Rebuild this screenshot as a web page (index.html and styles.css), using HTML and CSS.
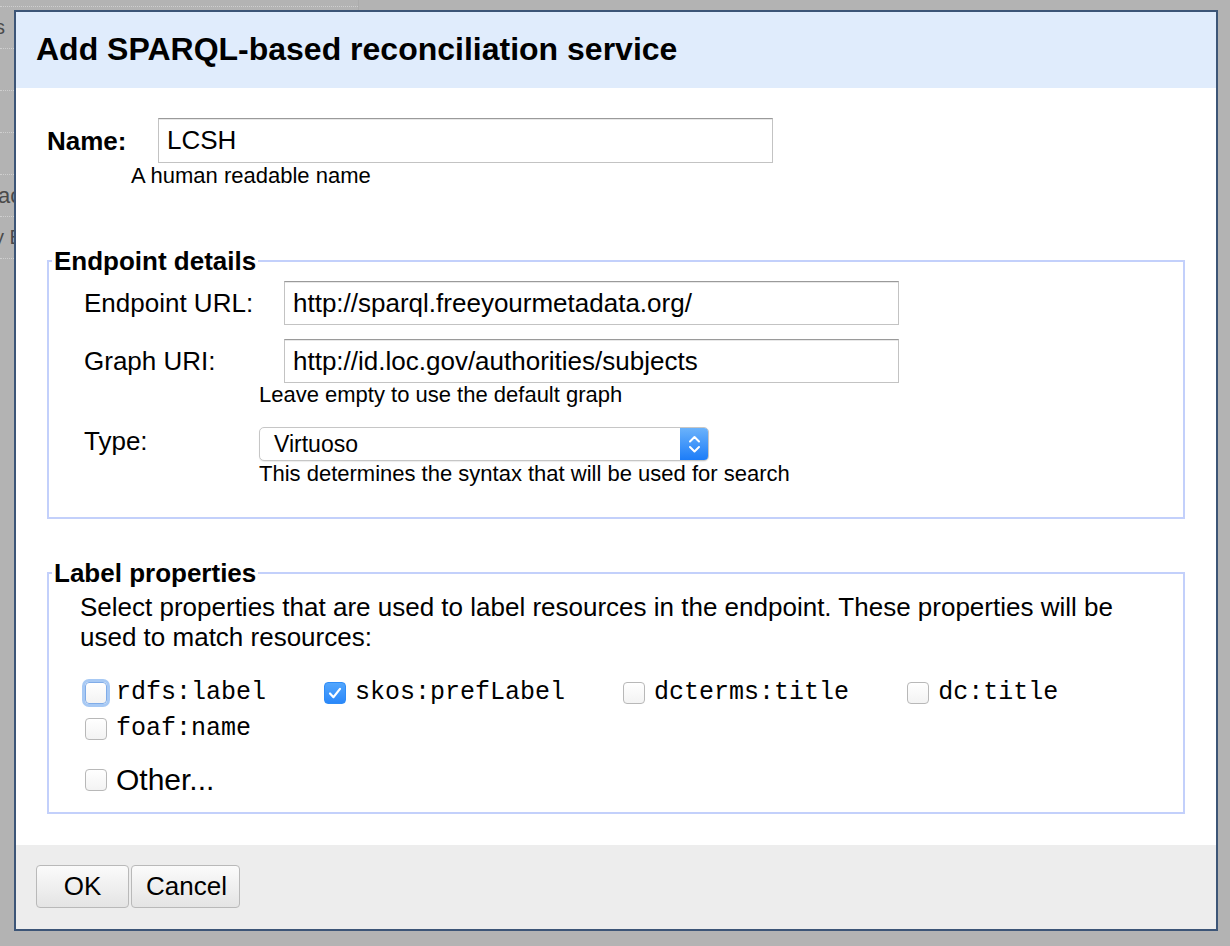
FILE: index.html
```html
<!DOCTYPE html>
<html>
<head>
<meta charset="utf-8">
<title>Add SPARQL-based reconciliation service</title>
<link rel="stylesheet" href="styles.css">
</head>
<body>
<div class="page">
  <div class="side">
    <div class="side-row first"></div>
    <div class="side-row"><span class="cut cut-s">s</span></div>
    <div class="side-row"></div>
    <div class="side-row"></div>
    <div class="side-row"></div>
    <div class="side-row"><span class="cut cut-ac">ac</span></div>
    <div class="side-row"><span class="cut cut-ye">y E</span></div>
  </div>
</div>

<div class="dialog">
  <div class="dlg-header"><h1>Add SPARQL-based reconciliation service</h1></div>

  <div class="dlg-body">
    <div class="name-row">
      <label class="name-label">Name:</label>
      <input class="text-input name-input" type="text" value="LCSH">
    </div>
    <div class="name-help">A human readable name</div>

    <fieldset class="fs fs-endpoint">
      <legend>Endpoint details</legend>
      <div class="fs-content endpoint-content">
        <div class="frow">
          <span class="flabel">Endpoint URL:</span>
          <input class="text-input url-input" type="text" value="http://sparql.freeyourmetadata.org/">
        </div>
        <div class="frow frow-2">
          <span class="flabel">Graph URI:</span>
          <input class="text-input url-input" type="text" value="http://id.loc.gov/authorities/subjects">
        </div>
        <div class="fhelp">Leave empty to use the default graph</div>
        <div class="frow frow-type">
          <span class="flabel type-label">Type:</span>
          <div class="select">
            <span class="select-value">Virtuoso</span>
            <span class="select-arrow">
              <svg width="29" height="32" viewBox="0 0 29 32"><polyline points="10,13.5 14.5,9 19,13.5" fill="none" stroke="#fff" stroke-width="2" stroke-linecap="round" stroke-linejoin="round"/><polyline points="10,19 14.5,23.5 19,19" fill="none" stroke="#fff" stroke-width="2" stroke-linecap="round" stroke-linejoin="round"/></svg>
            </span>
          </div>
        </div>
        <div class="fhelp">This determines the syntax that will be used for search</div>
      </div>
    </fieldset>

    <fieldset class="fs fs-label">
      <legend>Label properties</legend>
      <div class="fs-content label-content">
        <p class="intro">Select properties that are used to label resources in the endpoint. These properties will be used to match resources:</p>
        <div class="props">
          <label class="prop"><span class="cb focus"></span><span class="mono">rdfs:label</span></label>
          <label class="prop"><span class="cb checked"><svg width="22" height="22" viewBox="0 0 22 22"><path d="M6 11.5 L9.5 15.2 L16 6.8" fill="none" stroke="#fff" stroke-width="2.2" stroke-linecap="round" stroke-linejoin="round"/></svg></span><span class="mono">skos:prefLabel</span></label>
          <label class="prop"><span class="cb"></span><span class="mono">dcterms:title</span></label>
          <label class="prop"><span class="cb"></span><span class="mono">dc:title</span></label>
          <label class="prop"><span class="cb"></span><span class="mono">foaf:name</span></label>
        </div>
        <label class="prop other"><span class="cb"></span><span class="other-text">Other...</span></label>
      </div>
    </fieldset>
  </div>

  <div class="dlg-footer">
    <button class="btn btn-ok" type="button">OK</button>
    <button class="btn btn-cancel" type="button">Cancel</button>
  </div>
</div>
</body>
</html>
```
FILE: styles.css
```css
html, body {
  margin: 0;
  padding: 0;
}
body {
  background: #b3b3b3;
  font-family: "Liberation Sans", Arial, Helvetica, sans-serif;
  color: #000;
  width: 1230px;
  height: 946px;
  overflow: hidden;
}

/* background page */
.page {
  width: 1230px;
  height: 946px;
}
.side {
  width: 358px;
  border-right: 1px solid #ababab;
  height: 260px;
}
.side-row {
  height: 41px;
  border-bottom: 1px dotted #cfcfcf;
  display: flex;
  align-items: center;
  font-size: 20px;
  color: #4a4a4a;
  overflow: hidden;
  white-space: nowrap;
}
.side-row.first {
  height: 6px;
}
.cut-s { margin-left: -5px; }
.cut-ac { margin-left: -2px; font-size: 22px; }
.cut-ye { margin-left: -6px; }

/* dialog (overlay) */
.dialog {
  position: absolute;
  left: 14px;
  top: 10px;
  width: 1200px;
  border: 2px solid #3c5577;
  background: #fff;
}
.dlg-header {
  height: 76px;
  background: #e0ecfc;
  padding-left: 20px;
}
.dlg-header h1 {
  margin: 0;
  font-size: 32px;
  font-weight: bold;
  line-height: 74px;
  color: #000;
}

.dlg-body {
  padding: 30px 31px 31px 31px;
}

.name-row {
  display: flex;
  align-items: center;
}
.name-label {
  width: 111px;
  font-size: 26px;
  font-weight: bold;
  line-height: 30px;
}
.text-input {
  box-sizing: border-box;
  font-family: "Liberation Sans", Arial, Helvetica, sans-serif;
  font-size: 26px;
  color: #000;
  border: 1px solid #c3c3c3;
  border-top-color: #9a9a9a;
  box-shadow: inset 0 1px 0 #e8e8e8;
  background: #fff;
  padding: 0 8px;
  margin: 0;
  outline: none;
}
.name-input {
  width: 615px;
  height: 45px;
}
.name-help {
  padding-left: 84px;
  font-size: 22px;
  line-height: 26px;
}

/* fieldsets */
.fs {
  margin: 57px 0 0 0;
  padding: 0;
  border: 2px solid #c3d0fb;
  min-width: 0;
}
.fs legend {
  margin-left: 3px;
  padding: 0 2px;
  font-size: 26px;
  font-weight: bold;
  line-height: 30px;
}
.fs-label {
  margin-top: 39px;
}
.endpoint-content {
  padding: 5px 0 31px 35px;
}
.frow {
  display: flex;
  align-items: center;
}
.frow-2 {
  margin-top: 14px;
}
.frow-type {
  margin-top: 19px;
}
.flabel {
  width: 175px;
  font-size: 26px;
  line-height: 30px;
}
.type-label {
  padding-bottom: 6px;
}
.url-input {
  margin-left: 25px;
  width: 615px;
  height: 44px;
}
.fhelp {
  padding-left: 175px;
  font-size: 22px;
  line-height: 24px;
}

.select {
  box-sizing: border-box;
  width: 450px;
  height: 34px;
  border: 1px solid #c6c6c6;
  border-radius: 5px;
  box-shadow: 0 1px 1px rgba(0, 0, 0, 0.08);
  background: #fff;
  display: flex;
  align-items: center;
  overflow: hidden;
}
.select-value {
  flex: 1;
  padding-left: 14px;
  font-size: 23px;
  line-height: 32px;
}
.select-arrow {
  width: 29px;
  height: 34px;
  margin: -1px -1px -1px 0;
  background: linear-gradient(#6db4fb, #1a7bf8);
  display: flex;
  align-items: center;
  justify-content: center;
  border-radius: 0 5px 5px 0;
}
.select-arrow svg {
  display: block;
}

.label-content {
  padding: 4px 31px 14px 31px;
}
.intro {
  margin: 0;
  font-size: 26px;
  line-height: 30px;
}
.props {
  margin-top: 23px;
  padding-left: 5px;
  display: flex;
  flex-wrap: wrap;
  column-gap: 58px;
}
.prop {
  display: flex;
  align-items: center;
  height: 36px;
}
.cb {
  box-sizing: border-box;
  width: 22px;
  height: 22px;
  border: 1px solid #b8b8b8;
  border-radius: 4px;
  background: linear-gradient(#ffffff, #f3f3f3);
  margin-right: 9px;
  flex: none;
}
.cb svg {
  display: block;
  margin: -1px;
}
.cb.focus {
  border-color: #80ace8;
  box-shadow: 0 0 0 3px #a7c9f4;
}
.cb.checked {
  border-color: #2f8cf6;
  background: linear-gradient(#52a6fd, #2a88fa);
}
.mono {
  font-family: "Liberation Mono", "Courier New", monospace;
  font-size: 25px;
  line-height: 36px;
  color: #000;
}
.other {
  margin-top: 15px;
  padding-left: 5px;
}
.other-text {
  font-size: 30px;
  line-height: 36px;
}

/* footer */
.dlg-footer {
  height: 84px;
  box-sizing: border-box;
  background: #ededed;
  padding: 20px 20px 0 20px;
  display: flex;
  align-items: flex-start;
  gap: 2px;
}
.btn {
  box-sizing: border-box;
  height: 43px;
  border: 1px solid #b9b9b9;
  border-radius: 4px;
  background: linear-gradient(#fbfbfb, #e4e4e4);
  font-family: "Liberation Sans", Arial, Helvetica, sans-serif;
  font-size: 26px;
  color: #000;
  padding: 0 14px;
  margin: 0;
}
.btn-ok {
  width: 93px;
}
.btn-cancel {
  width: 109px;
}
```
